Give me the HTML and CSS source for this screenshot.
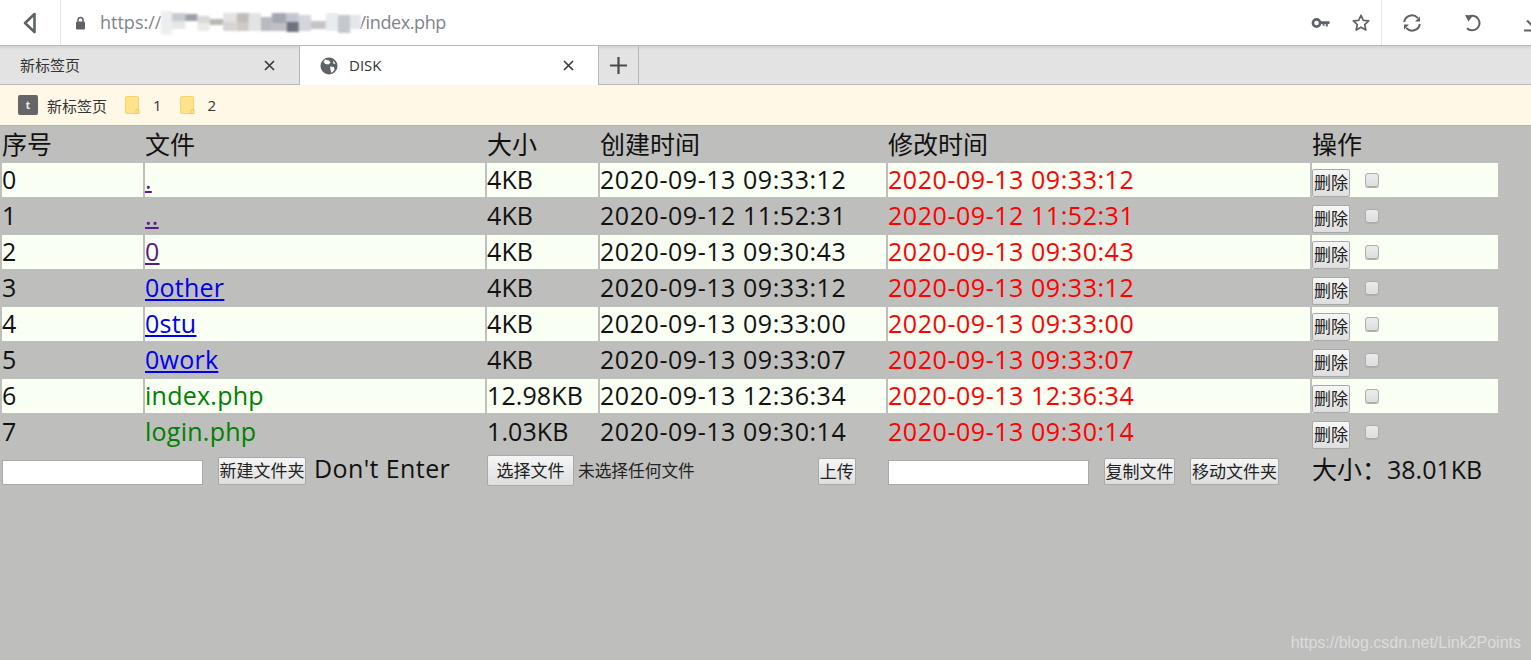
FILE: index.html
```html
<!DOCTYPE html>
<html lang="zh-CN">
<head>
<meta charset="utf-8">
<title>DISK</title>
<link rel="stylesheet" href="styles.css">
</head>
<body>
<header class="chrome">
  <div class="toolbar">
    <div class="back">
      <svg width="14" height="22" viewBox="0 0 14 22"><path d="M11.500 2 L2 11 L11.500 20 Z" fill="none" stroke="#5f6368" stroke-width="2.600" stroke-linejoin="round"/></svg>
    </div>
    <div class="address">
      <svg class="lock" width="11" height="14" viewBox="0 0 11 14"><path d="M3 6V4a2.500 2.500 0 0 1 5 0V6" fill="none" stroke="#5f6368" stroke-width="1.500"/><rect x="1" y="5.500" width="9" height="8" rx="1.200" fill="#5f6368"/></svg>
      <span class="url">https://</span>
      <svg class="blur" width="200" height="24" viewBox="0 0 148 24" preserveAspectRatio="none">
        <rect x="0" y="0" width="8" height="24" fill="#eceef0"/><rect x="8" y="2" width="10" height="8" fill="#c8cbd0"/><rect x="8" y="10" width="10" height="8" fill="#e6e6e8"/>
        <rect x="18" y="3" width="9" height="7" fill="#9c9fa8"/><rect x="27" y="5" width="9" height="7" fill="#d8d8d8"/><rect x="36" y="8" width="10" height="6" fill="#b9b7b2"/><rect x="27" y="12" width="9" height="8" fill="#ecebea"/><rect x="46" y="2" width="10" height="9" fill="#e4e2e2"/><rect x="46" y="11" width="10" height="9" fill="#d8d4d4"/>
        <rect x="56" y="2" width="9" height="9" fill="#bfbdba"/><rect x="56" y="11" width="9" height="9" fill="#cdcac3"/><rect x="65" y="2" width="9" height="18" fill="#e4e3e4"/><rect x="74" y="6" width="8" height="14" fill="#b9bac0"/><rect x="82" y="2" width="11" height="10" fill="#a4a7b0"/><rect x="93" y="2" width="9" height="9" fill="#c2c6d0"/><rect x="82" y="12" width="11" height="8" fill="#c0c0c4"/><rect x="93" y="11" width="9" height="10" fill="#6f7080"/>
        <rect x="102" y="4" width="9" height="16" fill="#d4d6dc"/><rect x="111" y="10" width="11" height="8" fill="#c4c4c8"/><rect x="122" y="2" width="9" height="18" fill="#e8ecee"/><rect x="131" y="4" width="9" height="18" fill="#c4c8cc"/><rect x="140" y="4" width="8" height="14" fill="#e4e6ec"/>
      </svg>
      <span class="url url-end">/index.php</span>
    </div>
    <div class="addr-icons">
      <svg width="20" height="14" viewBox="0 0 20 14"><circle cx="5.500" cy="7" r="3.600" fill="none" stroke="#5f6368" stroke-width="2.600"/><path d="M9 5.200h9.500v2.800h-1.700v2.500h-2v-2.500h-1.200v1.700h-2v-1.700H9z" fill="#5f6368"/></svg>
      <svg width="20" height="20" viewBox="0 0 20 20"><path d="M10 2.300l2.300 5 5.400.6-4 3.700 1.100 5.400-4.800-2.700-4.800 2.700 1.100-5.400-4-3.700 5.400-.6z" fill="none" stroke="#5f6368" stroke-width="1.700" stroke-linejoin="round"/></svg>
    </div>
    <div class="tool-icons">
      <svg width="20" height="20" viewBox="0 0 20 20"><path d="M2.200 9a7.800 7.800 0 0 1 13.600-3.900M17.800 11a7.800 7.800 0 0 1-13.600 3.900" fill="none" stroke="#5f6368" stroke-width="2"/><path d="M18 3.500v5h-5zM2 16.500v-5h5z" fill="#5f6368"/></svg>
      <svg width="20" height="20" viewBox="0 0 20 20"><path d="M6 3.500a7.300 7.300 0 1 1-2 11.700" fill="none" stroke="#5f6368" stroke-width="2"/><path d="M2 2l8 .5-4.500 6z" fill="#5f6368"/></svg>
      <svg class="dl" width="20" height="20" viewBox="0 0 20 20"><path d="M10 1v11M5 7.500l5 5 5-5M2 17.500h16" fill="none" stroke="#5f6368" stroke-width="2"/></svg>
    </div>
  </div>
  <nav class="tabs">
    <div class="tab">
      <span class="tab-title">新标签页</span>
      <svg class="close" width="11" height="11" viewBox="0 0 11 11"><path d="M1 1l9 9M10 1l-9 9" stroke="#3c3c3c" stroke-width="1.700"/></svg>
    </div>
    <div class="tab tab-active">
      <svg class="globe" width="18" height="18" viewBox="0 0 18 18"><circle cx="9" cy="9" r="8.500" fill="#5f6368"/><path d="M5 2.500l4 1 1.500 2-2 2-3-.5-2-2zM10 9.500l4 .5.500 3-3 3-1-3zM13 3.500l2.500 3-2 .5z" fill="#fff"/></svg>
      <span class="tab-title">DISK</span>
      <svg class="close" width="11" height="11" viewBox="0 0 11 11"><path d="M1 1l9 9M10 1l-9 9" stroke="#3c3c3c" stroke-width="1.700"/></svg>
    </div>
    <div class="tab-new">
      <svg width="19" height="19" viewBox="0 0 19 19"><path d="M9.500 1v17M1 9.500h17" stroke="#4a4a4a" stroke-width="2.200"/></svg>
    </div>
    <div class="tab-fill"></div>
  </nav>
  <div class="bookmarks">
    <span class="bm"><span class="bm-icon">t</span>新标签页</span>
    <span class="bm"><svg width="15" height="18" viewBox="0 0 15 18"><rect x=".5" y=".5" width="13" height="17" rx="1.500" fill="#ffe38c" stroke="#f5d468"/><path d="M11 17.500v-4h3v4z" fill="#ffe38c" stroke="#eccb5c"/></svg>1</span>
    <span class="bm"><svg width="15" height="18" viewBox="0 0 15 18"><rect x=".5" y=".5" width="13" height="17" rx="1.500" fill="#ffe38c" stroke="#f5d468"/><path d="M11 17.500v-4h3v4z" fill="#ffe38c" stroke="#eccb5c"/></svg>2</span>
  </div>
</header>
<main class="page">
  <table class="files">
    <colgroup>
      <col class="c1"><col class="c2"><col class="c3"><col class="c4"><col class="c5"><col class="c6">
    </colgroup>
    <thead>
      <tr><th>序号</th><th>文件</th><th>大小</th><th>创建时间</th><th>修改时间</th><th>操作</th></tr>
    </thead>
    <tbody>
      <tr class="odd"><td>0</td><td class="name"><a class="visited" href="#a">.</a></td><td class="size">4KB</td><td>2020-09-13 09:33:12</td><td class="mod">2020-09-13 09:33:12</td><td class="ops"><div class="op"><button class="btn">删除</button><input type="checkbox" class="check"></div></td></tr>
      <tr><td>1</td><td class="name"><a class="visited" href="#b">..</a></td><td class="size">4KB</td><td>2020-09-12 11:52:31</td><td class="mod">2020-09-12 11:52:31</td><td class="ops"><div class="op"><button class="btn">删除</button><input type="checkbox" class="check"></div></td></tr>
      <tr class="odd"><td>2</td><td class="name"><a class="visited" href="#c">0</a></td><td class="size">4KB</td><td>2020-09-13 09:30:43</td><td class="mod">2020-09-13 09:30:43</td><td class="ops"><div class="op"><button class="btn">删除</button><input type="checkbox" class="check"></div></td></tr>
      <tr><td>3</td><td class="name"><a class="dir" href="#d">0other</a></td><td class="size">4KB</td><td>2020-09-13 09:33:12</td><td class="mod">2020-09-13 09:33:12</td><td class="ops"><div class="op"><button class="btn">删除</button><input type="checkbox" class="check"></div></td></tr>
      <tr class="odd"><td>4</td><td class="name"><a class="dir" href="#e">0stu</a></td><td class="size">4KB</td><td>2020-09-13 09:33:00</td><td class="mod">2020-09-13 09:33:00</td><td class="ops"><div class="op"><button class="btn">删除</button><input type="checkbox" class="check"></div></td></tr>
      <tr><td>5</td><td class="name"><a class="dir" href="#f">0work</a></td><td class="size">4KB</td><td>2020-09-13 09:33:07</td><td class="mod">2020-09-13 09:33:07</td><td class="ops"><div class="op"><button class="btn">删除</button><input type="checkbox" class="check"></div></td></tr>
      <tr class="odd"><td>6</td><td class="name php">index.php</td><td class="size">12.98KB</td><td>2020-09-13 12:36:34</td><td class="mod">2020-09-13 12:36:34</td><td class="ops"><div class="op"><button class="btn">删除</button><input type="checkbox" class="check"></div></td></tr>
      <tr><td>7</td><td class="name php">login.php</td><td class="size">1.03KB</td><td>2020-09-13 09:30:14</td><td class="mod">2020-09-13 09:30:14</td><td class="ops"><div class="op"><button class="btn">删除</button><input type="checkbox" class="check"></div></td></tr>
    </tbody>
    <tfoot>
      <tr>
        <td colspan="2"><div class="foot foot-new"><input type="text" class="field"><button class="btn">新建文件夹</button><span class="warn">Don't Enter</span></div></td>
        <td colspan="2"><div class="foot foot-upload"><button class="btn btn-file">选择文件</button><span class="nofile">未选择任何文件</span><button class="btn btn-up">上传</button></div></td>
        <td><div class="foot foot-copy"><input type="text" class="field"><button class="btn">复制文件</button><button class="btn">移动文件夹</button></div></td>
        <td><div class="foot total">大小：38.01KB</div></td>
      </tr>
    </tfoot>
  </table>
</main>
<div class="watermark">https://blog.csdn.net/Link2Points</div>
</body>
</html>
```
FILE: styles.css
```css
* { box-sizing: border-box; }
html, body { margin: 0; height: 100%; overflow: hidden; }
body {
  background: #bebebc;
  font-family: "Open Sans", "Noto Sans CJK SC", sans-serif;
  color: #111;
  position: relative;
}
.chrome { display: flex; flex-direction: column; }
.toolbar {
  height: 45px;
  background: #fff;
  display: flex;
  align-items: stretch;
}
.back {
  width: 61px;
  border-right: 1px solid #e3e3e3;
  padding: 12px 0 0 23px;
}
.back svg { display: block; }
.address {
  flex: 1;
  display: flex;
  align-items: center;
  padding-left: 14px;
  font-size: 18px;
  color: #80848a;
}
.lock { margin-right: 14px; }
.url { margin-top: -2px; }
.url-end { letter-spacing: -0.4px; margin-left: -2px; }
.blur { filter: blur(0.8px); }
.addr-icons {
  display: flex;
  align-items: center;
  gap: 20px;
  padding-right: 10px;
  border-right: 1px solid #e6e6e6;
}
.tool-icons {
  width: 149px;
  display: flex;
  align-items: center;
  gap: 41px;
  padding-left: 20px;
  overflow: hidden;
  flex: none;
}
.tool-icons svg { flex: none; }
.tool-icons .dl { margin-left: -2px; }
.tabs {
  height: 40px;
  display: flex;
  background: linear-gradient(#d4d4d4, #e3e3e3 4px);
  border-top: 1px solid #b7b7b7;
  font-size: 15px;
  color: #333;
}
.tab {
  width: 300px;
  display: flex;
  align-items: center;
  padding: 0 24px 0 20px;
  border-bottom: 1px solid #b7b7b7;
  border-right: 1px solid #b7b7b7;
}
.tab-title { flex: 1; margin-top: -2px; }
.tab-active {
  width: 299px;
  background: #fff;
  border-bottom: 0;
  border-right: 1px solid #b7b7b7;
  padding-right: 24px;
}
.globe { margin-right: 11px; }
.tab-new {
  width: 40px;
  display: flex;
  align-items: center;
  justify-content: center;
  border-bottom: 1px solid #b7b7b7;
  border-right: 1px solid #b7b7b7;
}
.tab-fill { flex: 1; border-bottom: 1px solid #b7b7b7; }
.bookmarks {
  height: 40px;
  background: #fff8e6;
  display: flex;
  align-items: center;
  gap: 18px;
  padding-left: 18px;
  font-size: 15px;
  color: #333;
}
.bm { display: flex; align-items: center; gap: 9px; }
.bm svg { margin-right: 4px; }
.bm-icon {
  width: 20px;
  height: 20px;
  border-radius: 2px;
  background: #666;
  color: #eee;
  font-size: 10px;
  font-weight: 700;
  display: flex;
  align-items: center;
  justify-content: center;
}
.page { box-shadow: inset 0 1px 0 #b3b3b7; }
.files {
  width: 1500px;
  table-layout: fixed;
  border-collapse: separate;
  border-spacing: 2px;
  font-size: 25px;
  letter-spacing: 0.55px;
}
.c1 { width: 141px; }
.c2 { width: 340px; }
.c3 { width: 111px; }
.c4 { width: 286px; }
.c5 { width: 422px; }
.c6 { width: 186px; }
.files th {
  height: 34px;
  padding: 0;
  line-height: 34px;
  text-align: left;
  font-weight: 400;
  letter-spacing: 0;
}
.files td {
  height: 34px;
  padding: 0;
  line-height: 32px;
  white-space: nowrap;
  vertical-align: top;
}
.files .odd td { background: #f9fff3; }
.files .name { letter-spacing: 0.25px; }
.files .size { letter-spacing: 0.1px; }
.mod { color: #f00; }
.php { color: #008000; }
.visited { color: #551a8b; }
.dir { color: #00e; }
.op { display: flex; align-items: flex-end; height: 34px; }
.btn {
  font-family: "Open Sans", "Noto Sans CJK SC", sans-serif;
  font-size: 17px;
  line-height: 20px;
  padding: 0;
  margin: 0;
  border: 1px solid #a9a9a9;
  border-radius: 2px;
  background: linear-gradient(#f6f6f6, #dedede);
  color: #222;
  white-space: nowrap;
}
.op .btn { width: 38px; height: 28px; flex: none; }
.check {
  appearance: none;
  width: 14px;
  height: 14px;
  margin: 0 0 10px 15px;
  border: 1px solid #adadad;
  border-radius: 3px;
  background: linear-gradient(#ececec, #dddddd);
  box-shadow: 0 1px 0 #b0b0b0;
}
.foot { display: flex; align-items: flex-end; height: 36px; }
.field {
  width: 201px;
  height: 25px;
  border: 1px solid #a9a9a9;
  background: #fff;
  margin: 0 0 2px;
}
.foot-new .btn { width: 88px; height: 28px; margin: 0 8px 2px 15px; }
.warn { line-height: 34px; height: 36px; letter-spacing: 0.4px; }
.btn-file { width: 87px; height: 31px; margin-bottom: 1px; }
.nofile { font-size: 16.700px; letter-spacing: 0; margin: 0 0 3px 4px; line-height: 26px; color: #222; }
.btn-up { width: 38px; height: 27px; margin: 0 0 2px 123px; }
.foot-copy .btn { height: 27px; margin: 0 0 2px 15px; width: 71px; }
.foot-copy .btn:last-child { width: 89px; }
.total { line-height: 32px; align-items: center; letter-spacing: 0; }
.watermark {
  position: absolute;
  right: 10px;
  bottom: 8px;
  font-family: "Liberation Sans", sans-serif;
  font-size: 16px;
  color: #dcdcdc;
}
```
